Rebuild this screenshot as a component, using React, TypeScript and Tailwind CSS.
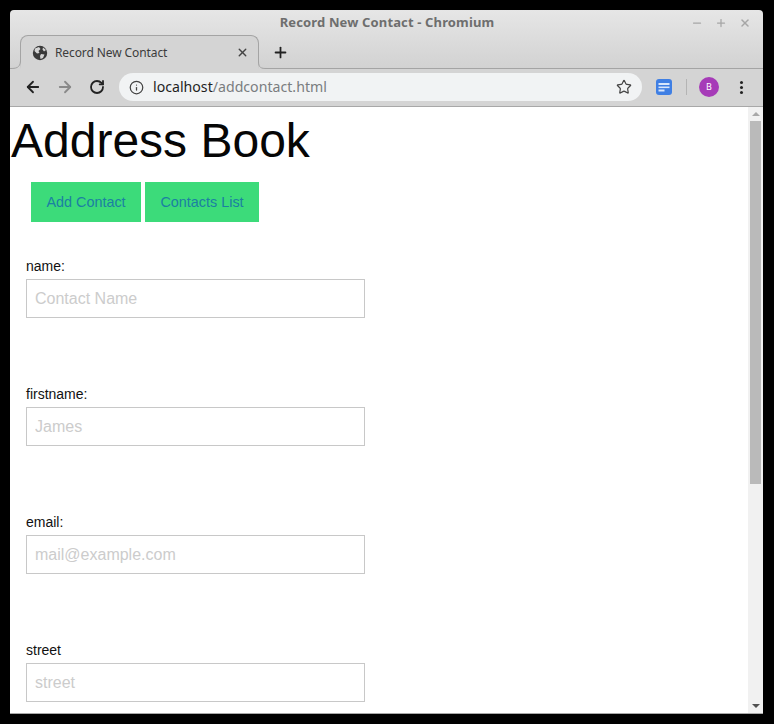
import React from 'react';
import { ArrowLeft, ArrowRight, RotateCw, Info, Star, X, Plus, Minus } from 'lucide-react';

const fields = [
  { label: 'name:', placeholder: 'Contact Name' },
  { label: 'firstname:', placeholder: 'James' },
  { label: 'email:', placeholder: 'mail@example.com' },
  { label: 'street', placeholder: 'street' },
];

const App: React.FC = () => {
  return (
    <div className="w-[774px] h-[724px] bg-black pt-[10px] pl-[10px] overflow-hidden font-['Liberation_Sans',sans-serif]">
      <div className="w-[753px] h-[704px] flex flex-col rounded-t-[4px] overflow-hidden border-b border-b-[#a8a8a8]">
        {/* Title bar + tab strip */}
        <div className="h-[59px] shrink-0 bg-gradient-to-b from-[#e6e6e6] to-[#d2d2d2] border-b border-[#a4a4a4] flex flex-col relative">
          <div className="h-[25px] shrink-0 flex items-center justify-center relative">
            <span className="font-['Noto_Sans',sans-serif] font-bold text-[13px] tracking-[0.14px] text-[#6e6e6e] ml-px">Record New Contact - Chromium</span>
            <div className="absolute right-[12px] top-[7px] flex items-center gap-[12px] text-[#a6a6a6]">
              <Minus size={12} strokeWidth={2.5} />
              <Plus size={12} strokeWidth={2.5} />
              <X size={12} strokeWidth={3} />
            </div>
          </div>
          <div className="flex-1 flex items-start pl-[10px]">
            <div className="w-[239px] h-[34px] -mb-px bg-[#d4d4d4] border border-b-0 border-[#a4a4a4] rounded-t-[8px] flex items-center pl-[11px] pr-[9px] relative z-10">
              {/* tab feet */}
              <svg width="11" height="8" viewBox="0 0 11 8" className="absolute left-[-11px] bottom-0">
                <path d="M0 7.5 C6 7.5 10 7 10.5 0 L11 8 L0 8 Z" fill="#d4d4d4" />
                <path d="M0 7.5 C6 7.5 10 7 10.5 0" fill="none" stroke="#a4a4a4" />
              </svg>
              <svg width="9" height="8" viewBox="0 0 9 8" className="absolute right-[-9px] bottom-0">
                <path d="M9 7.5 C3 7.5 0.5 7 0.5 0 L0 8 L9 8 Z" fill="#d4d4d4" />
                <path d="M9 7.5 C3 7.5 0.5 7 0.5 0" fill="none" stroke="#a4a4a4" />
              </svg>
              <svg width="16" height="16" viewBox="0 0 16 16" className="shrink-0">
                <circle cx="8" cy="8" r="7.2" fill="#3a3a3a" />
                <path d="M3 3.5 L7 2 L8.5 4 L6.5 6 L7.5 8 L5 8.5 L2.5 6 Z M9 9 L12.5 9.5 L11 13 L8.5 14 L8 11 Z M11 2.5 L14 5 L12 6.5 L10.5 4.5 Z" fill="#d4d4d4" />
              </svg>
              <span className="ml-[7px] text-[12px] text-[#3c3c3c] font-['Noto_Sans',sans-serif] flex-1 tracking-[-0.1px]">Record New Contact</span>
              <X size={13} strokeWidth={2.5} className="text-[#444]" />
            </div>
            <Plus size={17} strokeWidth={2.5} className="text-[#222] ml-[13px] mt-[9px]" />
          </div>
        </div>

        {/* Toolbar */}
        <div className="h-[38px] shrink-0 bg-[#d4d4d4] border-b border-[#a8a8a8] flex items-center pl-[14px] pr-[13px] pb-px">
          <ArrowLeft size={18} strokeWidth={2.4} className="text-[#222]" />
          <ArrowRight size={18} strokeWidth={2.4} className="text-[#8a8a8a] ml-[14px]" />
          <RotateCw size={16} strokeWidth={2.7} className="text-[#222] ml-[15px]" />
          <div className="ml-[14px] w-[523px] h-[28px] bg-[#f1f3f4] rounded-full flex items-center pl-[10px] pr-[10px]">
            <Info size={15} strokeWidth={2} className="text-[#444]" />
            <span className="ml-[9px] flex-1 text-[14.15px] font-['Noto_Sans',sans-serif] text-[#1f1f1f]">
              localhost<span className="text-[#7a7d80]">/addcontact.html</span>
            </span>
            <Star size={16} strokeWidth={1.8} className="text-[#444]" />
          </div>
          <svg width="16" height="16" viewBox="0 0 16 16" className="ml-[14px] shrink-0">
            <rect width="16" height="16" rx="3" fill="#3f7fe4" />
            <rect x="2.5" y="4" width="11" height="2" fill="#d7e6fb" />
            <rect x="2.5" y="7.5" width="11" height="1.6" fill="#d7e6fb" />
            <rect x="2.5" y="10.5" width="6" height="2" fill="#d7e6fb" />
          </svg>
          <div className="w-px h-[16px] bg-[#b4b4b4] ml-[14px]" />
          <div className="w-[20px] h-[20px] ml-[12px] rounded-full bg-[#a63bb8] text-white text-[9px] flex items-center justify-center font-['Noto_Sans',sans-serif]">B</div>
          <div className="ml-[21px] flex flex-col gap-[2px]">
            <span className="w-[3px] h-[3px] rounded-full bg-[#222]" />
            <span className="w-[3px] h-[3px] rounded-full bg-[#222]" />
            <span className="w-[3px] h-[3px] rounded-full bg-[#222]" />
          </div>
        </div>

        {/* Page */}
        <div className="flex-1 min-h-0 flex bg-white">
          <div className="flex-1 overflow-hidden">
            <h1 className="text-[48px] leading-[55px] text-[#060606] mt-[6px] ml-px">Address Book</h1>
            <nav className="flex gap-[4px] ml-[21px] mt-[14px]">
              <a className="h-[40px] w-[110px] pt-px bg-[#3cdb7a] text-[#1b80a2] text-[14.4px] flex items-center justify-center">Add Contact</a>
              <a className="h-[40px] w-[114px] pt-px bg-[#3cdb7a] text-[#1b80a2] text-[14.4px] flex items-center justify-center">Contacts List</a>
            </nav>
            <form className="ml-[16px] mt-[34px] flex flex-col gap-[66px]">
              {fields.map((f) => (
                <div key={f.label} className="flex flex-col">
                  <label className="text-[14px] leading-[18px] pt-px mb-[4px] text-[#111]">{f.label}</label>
                  <input
                    readOnly
                    placeholder={f.placeholder}
                    className="w-[339px] h-[39px] border border-[#c8c8c8] px-[8px] text-[16px] outline-none placeholder:text-[#cccccc]"
                  />
                </div>
              ))}
            </form>
          </div>

          {/* Scrollbar */}
          <div className="w-[15px] shrink-0 bg-[#f1f1f1] flex flex-col items-center pt-[5px] pb-[5px]">
            <div className="w-0 h-0 border-x-[4px] border-x-transparent border-b-[4px] border-b-[#a8a8a8]" />
            <div className="w-[11px] h-[363px] bg-[#bababa] mt-[5px]" />
            <div className="flex-1" />
            <div className="w-0 h-0 border-x-[4px] border-x-transparent border-t-[4px] border-t-[#505050]" />
          </div>
        </div>
      </div>
    </div>
  );
};

export default App;
